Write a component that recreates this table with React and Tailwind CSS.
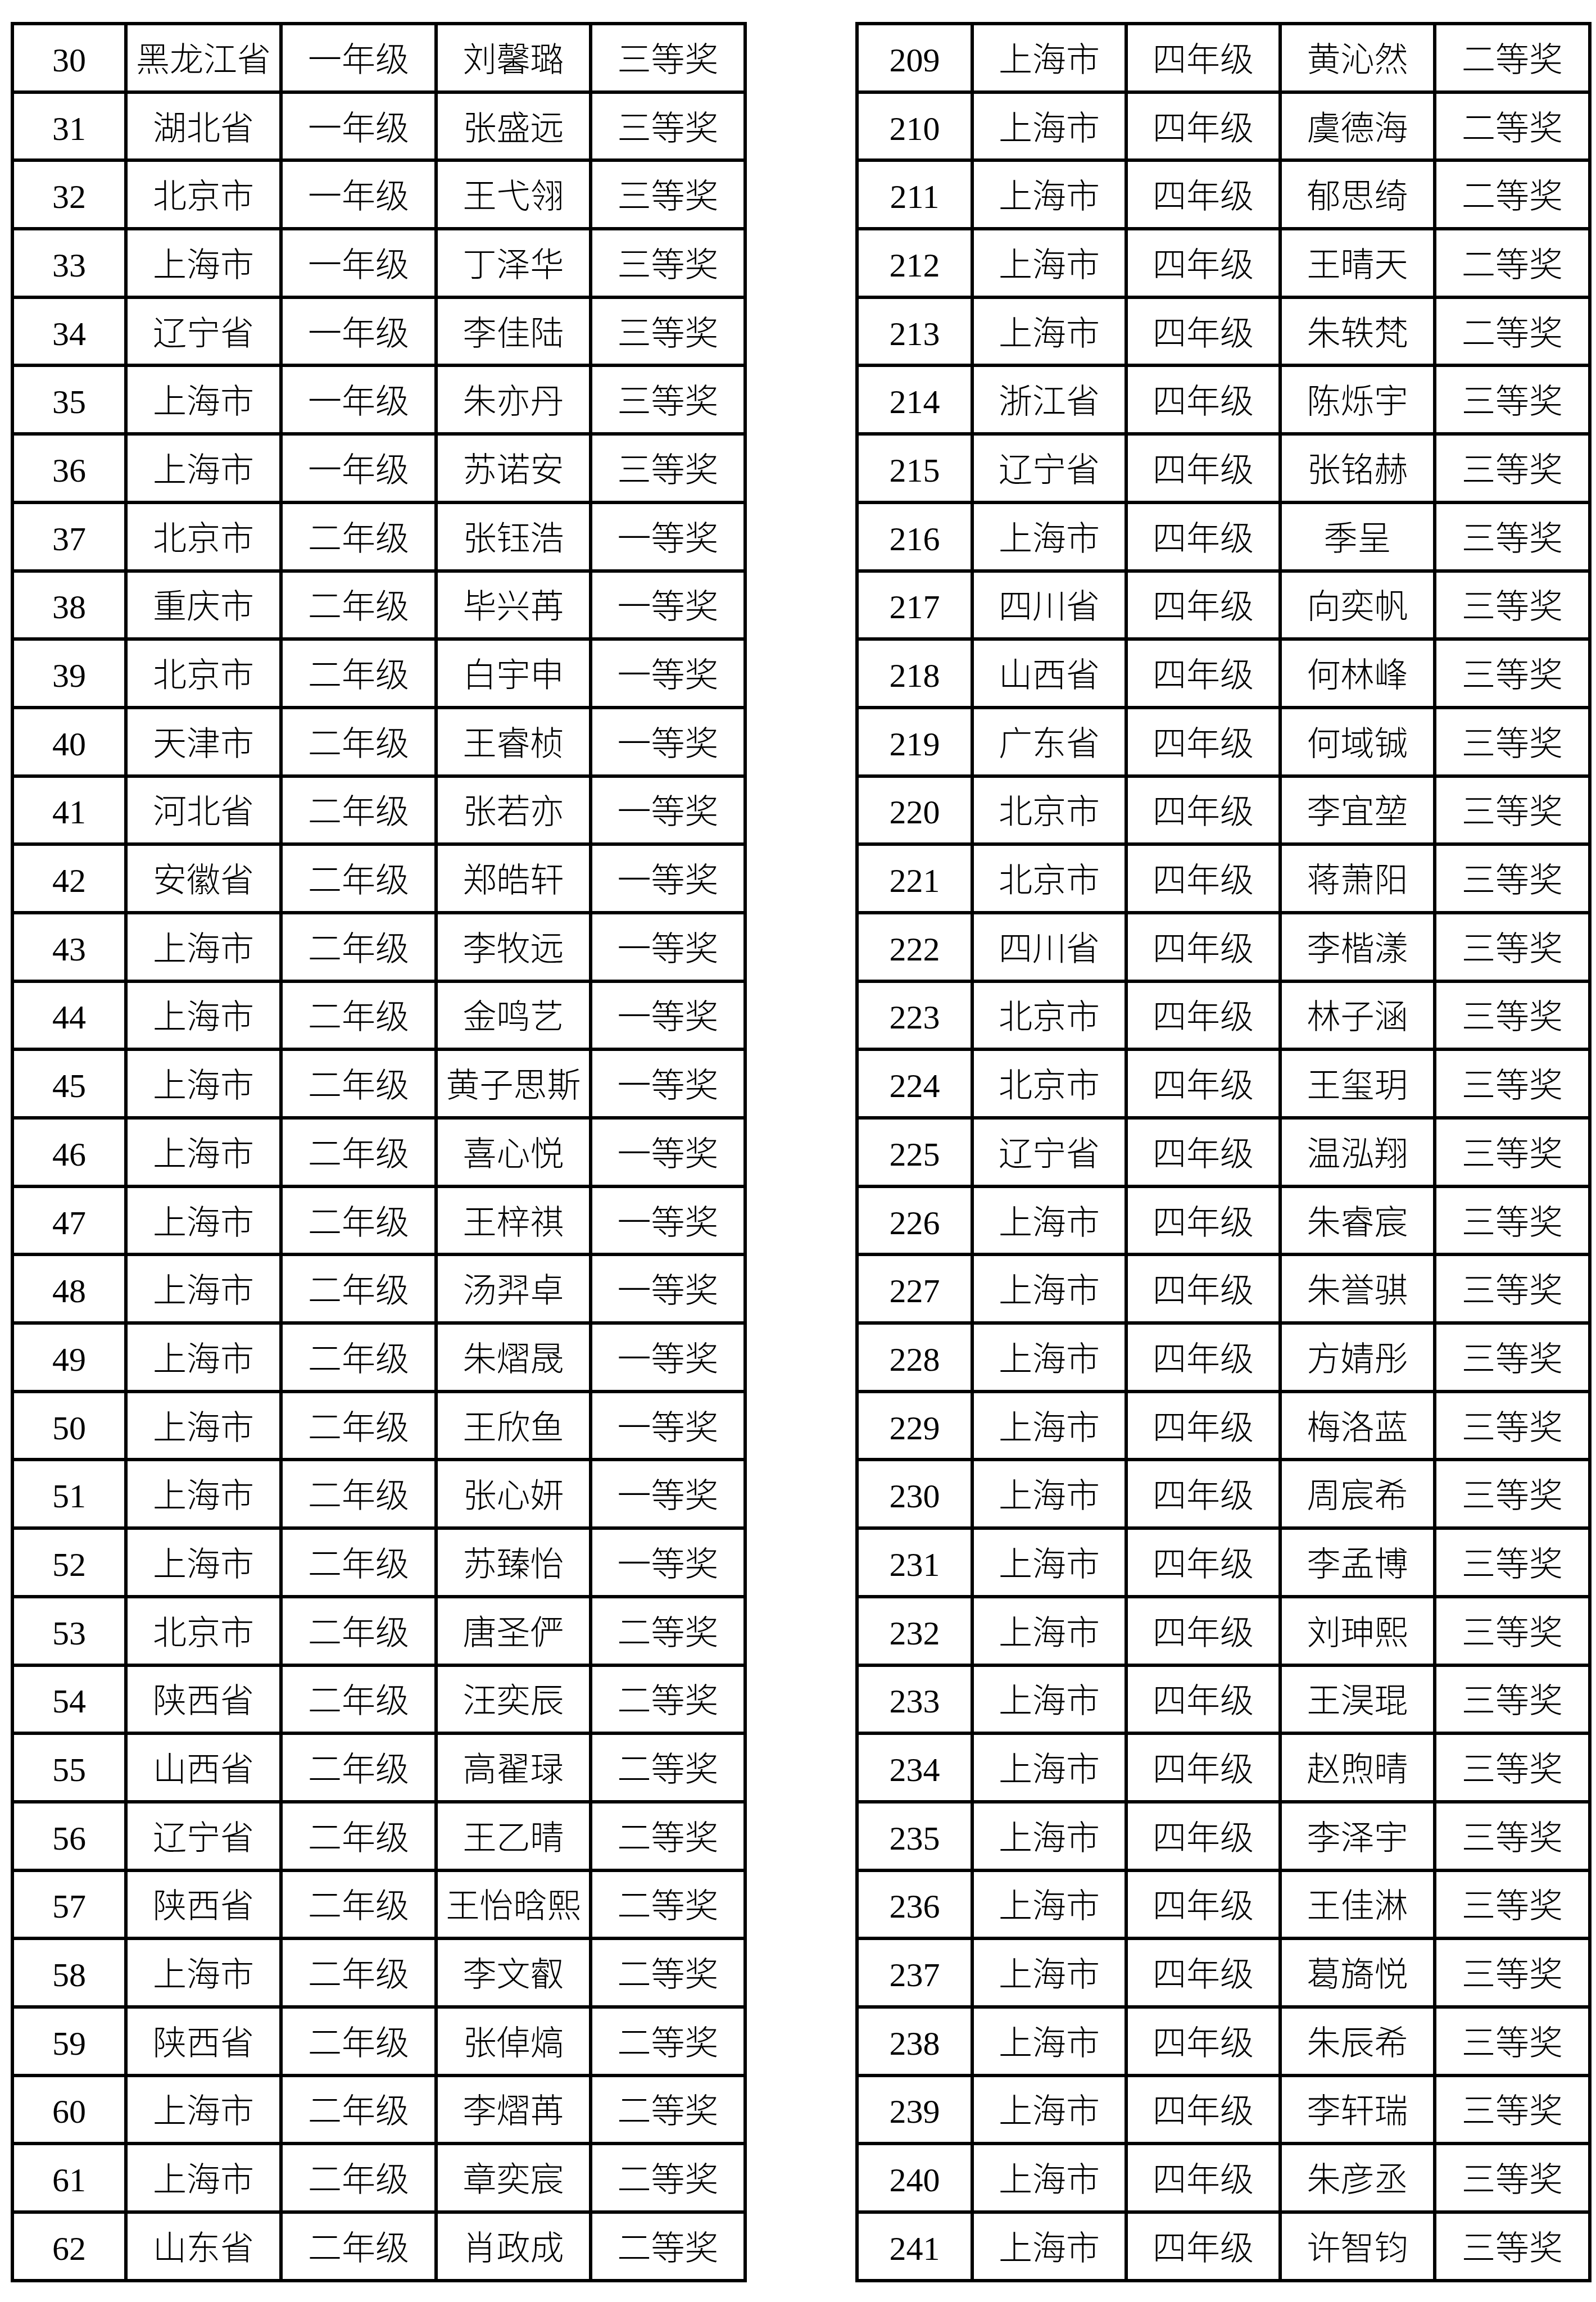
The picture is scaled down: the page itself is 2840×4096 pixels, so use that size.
const left = [
  ['30', '黑龙江省', '一年级', '刘馨璐', '三等奖'],
  ['31', '湖北省', '一年级', '张盛远', '三等奖'],
  ['32', '北京市', '一年级', '王弋翎', '三等奖'],
  ['33', '上海市', '一年级', '丁泽华', '三等奖'],
  ['34', '辽宁省', '一年级', '李佳陆', '三等奖'],
  ['35', '上海市', '一年级', '朱亦丹', '三等奖'],
  ['36', '上海市', '一年级', '苏诺安', '三等奖'],
  ['37', '北京市', '二年级', '张钰浩', '一等奖'],
  ['38', '重庆市', '二年级', '毕兴苒', '一等奖'],
  ['39', '北京市', '二年级', '白宇申', '一等奖'],
  ['40', '天津市', '二年级', '王睿桢', '一等奖'],
  ['41', '河北省', '二年级', '张若亦', '一等奖'],
  ['42', '安徽省', '二年级', '郑皓轩', '一等奖'],
  ['43', '上海市', '二年级', '李牧远', '一等奖'],
  ['44', '上海市', '二年级', '金鸣艺', '一等奖'],
  ['45', '上海市', '二年级', '黄子思斯', '一等奖'],
  ['46', '上海市', '二年级', '喜心悦', '一等奖'],
  ['47', '上海市', '二年级', '王梓祺', '一等奖'],
  ['48', '上海市', '二年级', '汤羿卓', '一等奖'],
  ['49', '上海市', '二年级', '朱熠晟', '一等奖'],
  ['50', '上海市', '二年级', '王欣鱼', '一等奖'],
  ['51', '上海市', '二年级', '张心妍', '一等奖'],
  ['52', '上海市', '二年级', '苏臻怡', '一等奖'],
  ['53', '北京市', '二年级', '唐圣俨', '二等奖'],
  ['54', '陕西省', '二年级', '汪奕辰', '二等奖'],
  ['55', '山西省', '二年级', '高翟琭', '二等奖'],
  ['56', '辽宁省', '二年级', '王乙晴', '二等奖'],
  ['57', '陕西省', '二年级', '王怡晗熙', '二等奖'],
  ['58', '上海市', '二年级', '李文叡', '二等奖'],
  ['59', '陕西省', '二年级', '张倬熇', '二等奖'],
  ['60', '上海市', '二年级', '李熠苒', '二等奖'],
  ['61', '上海市', '二年级', '章奕宸', '二等奖'],
  ['62', '山东省', '二年级', '肖政成', '二等奖'],
]

const right = [
  ['209', '上海市', '四年级', '黄沁然', '二等奖'],
  ['210', '上海市', '四年级', '虞德海', '二等奖'],
  ['211', '上海市', '四年级', '郁思绮', '二等奖'],
  ['212', '上海市', '四年级', '王晴天', '二等奖'],
  ['213', '上海市', '四年级', '朱轶梵', '二等奖'],
  ['214', '浙江省', '四年级', '陈烁宇', '三等奖'],
  ['215', '辽宁省', '四年级', '张铭赫', '三等奖'],
  ['216', '上海市', '四年级', '季呈', '三等奖'],
  ['217', '四川省', '四年级', '向奕帆', '三等奖'],
  ['218', '山西省', '四年级', '何林峰', '三等奖'],
  ['219', '广东省', '四年级', '何域铖', '三等奖'],
  ['220', '北京市', '四年级', '李宜堃', '三等奖'],
  ['221', '北京市', '四年级', '蒋萧阳', '三等奖'],
  ['222', '四川省', '四年级', '李楷漾', '三等奖'],
  ['223', '北京市', '四年级', '林子涵', '三等奖'],
  ['224', '北京市', '四年级', '王玺玥', '三等奖'],
  ['225', '辽宁省', '四年级', '温泓翔', '三等奖'],
  ['226', '上海市', '四年级', '朱睿宸', '三等奖'],
  ['227', '上海市', '四年级', '朱誉骐', '三等奖'],
  ['228', '上海市', '四年级', '方婧彤', '三等奖'],
  ['229', '上海市', '四年级', '梅洛蓝', '三等奖'],
  ['230', '上海市', '四年级', '周宸希', '三等奖'],
  ['231', '上海市', '四年级', '李孟博', '三等奖'],
  ['232', '上海市', '四年级', '刘珅熙', '三等奖'],
  ['233', '上海市', '四年级', '王淏琨', '三等奖'],
  ['234', '上海市', '四年级', '赵煦晴', '三等奖'],
  ['235', '上海市', '四年级', '李泽宇', '三等奖'],
  ['236', '上海市', '四年级', '王佳淋', '三等奖'],
  ['237', '上海市', '四年级', '葛旖悦', '三等奖'],
  ['238', '上海市', '四年级', '朱辰希', '三等奖'],
  ['239', '上海市', '四年级', '李轩瑞', '三等奖'],
  ['240', '上海市', '四年级', '朱彦丞', '三等奖'],
  ['241', '上海市', '四年级', '许智钧', '三等奖'],
]

// cell widths include the 6px right border
const leftCols = ['w-[202px]', 'w-[276px]', 'w-[276px]', 'w-[275px]', 'w-[275px]']
const rightCols = ['w-[205px]', 'w-[274px]', 'w-[274px]', 'w-[275px]', 'w-[276px]']

const AwardTable = ({ rows, cols }) => (
  <div className="w-[1310px] border-l-[6px] border-t-[6px] border-black">
    {rows.map((row) => (
      <div key={row[0]} className="flex h-[121.7px] border-b-[6px] border-black">
        {row.map((text, i) => (
          <div
            key={i}
            className={`${cols[i]} flex items-center justify-center border-r-[6px] border-black pt-[8px] whitespace-nowrap`}
          >
            {text}
          </div>
        ))}
      </div>
    ))}
  </div>
)

const App = () => {
  return (
    <div
      className="w-[2840px] h-[4096px] bg-white text-black text-[60px] leading-none font-light flex items-start gap-[193px] pt-[39px] pl-[19px]"
      style={{ fontFamily: '"Liberation Serif", "Noto Sans CJK SC", serif' }}
    >
      <AwardTable rows={left} cols={leftCols} />
      <AwardTable rows={right} cols={rightCols} />
    </div>
  )
}

export default App
